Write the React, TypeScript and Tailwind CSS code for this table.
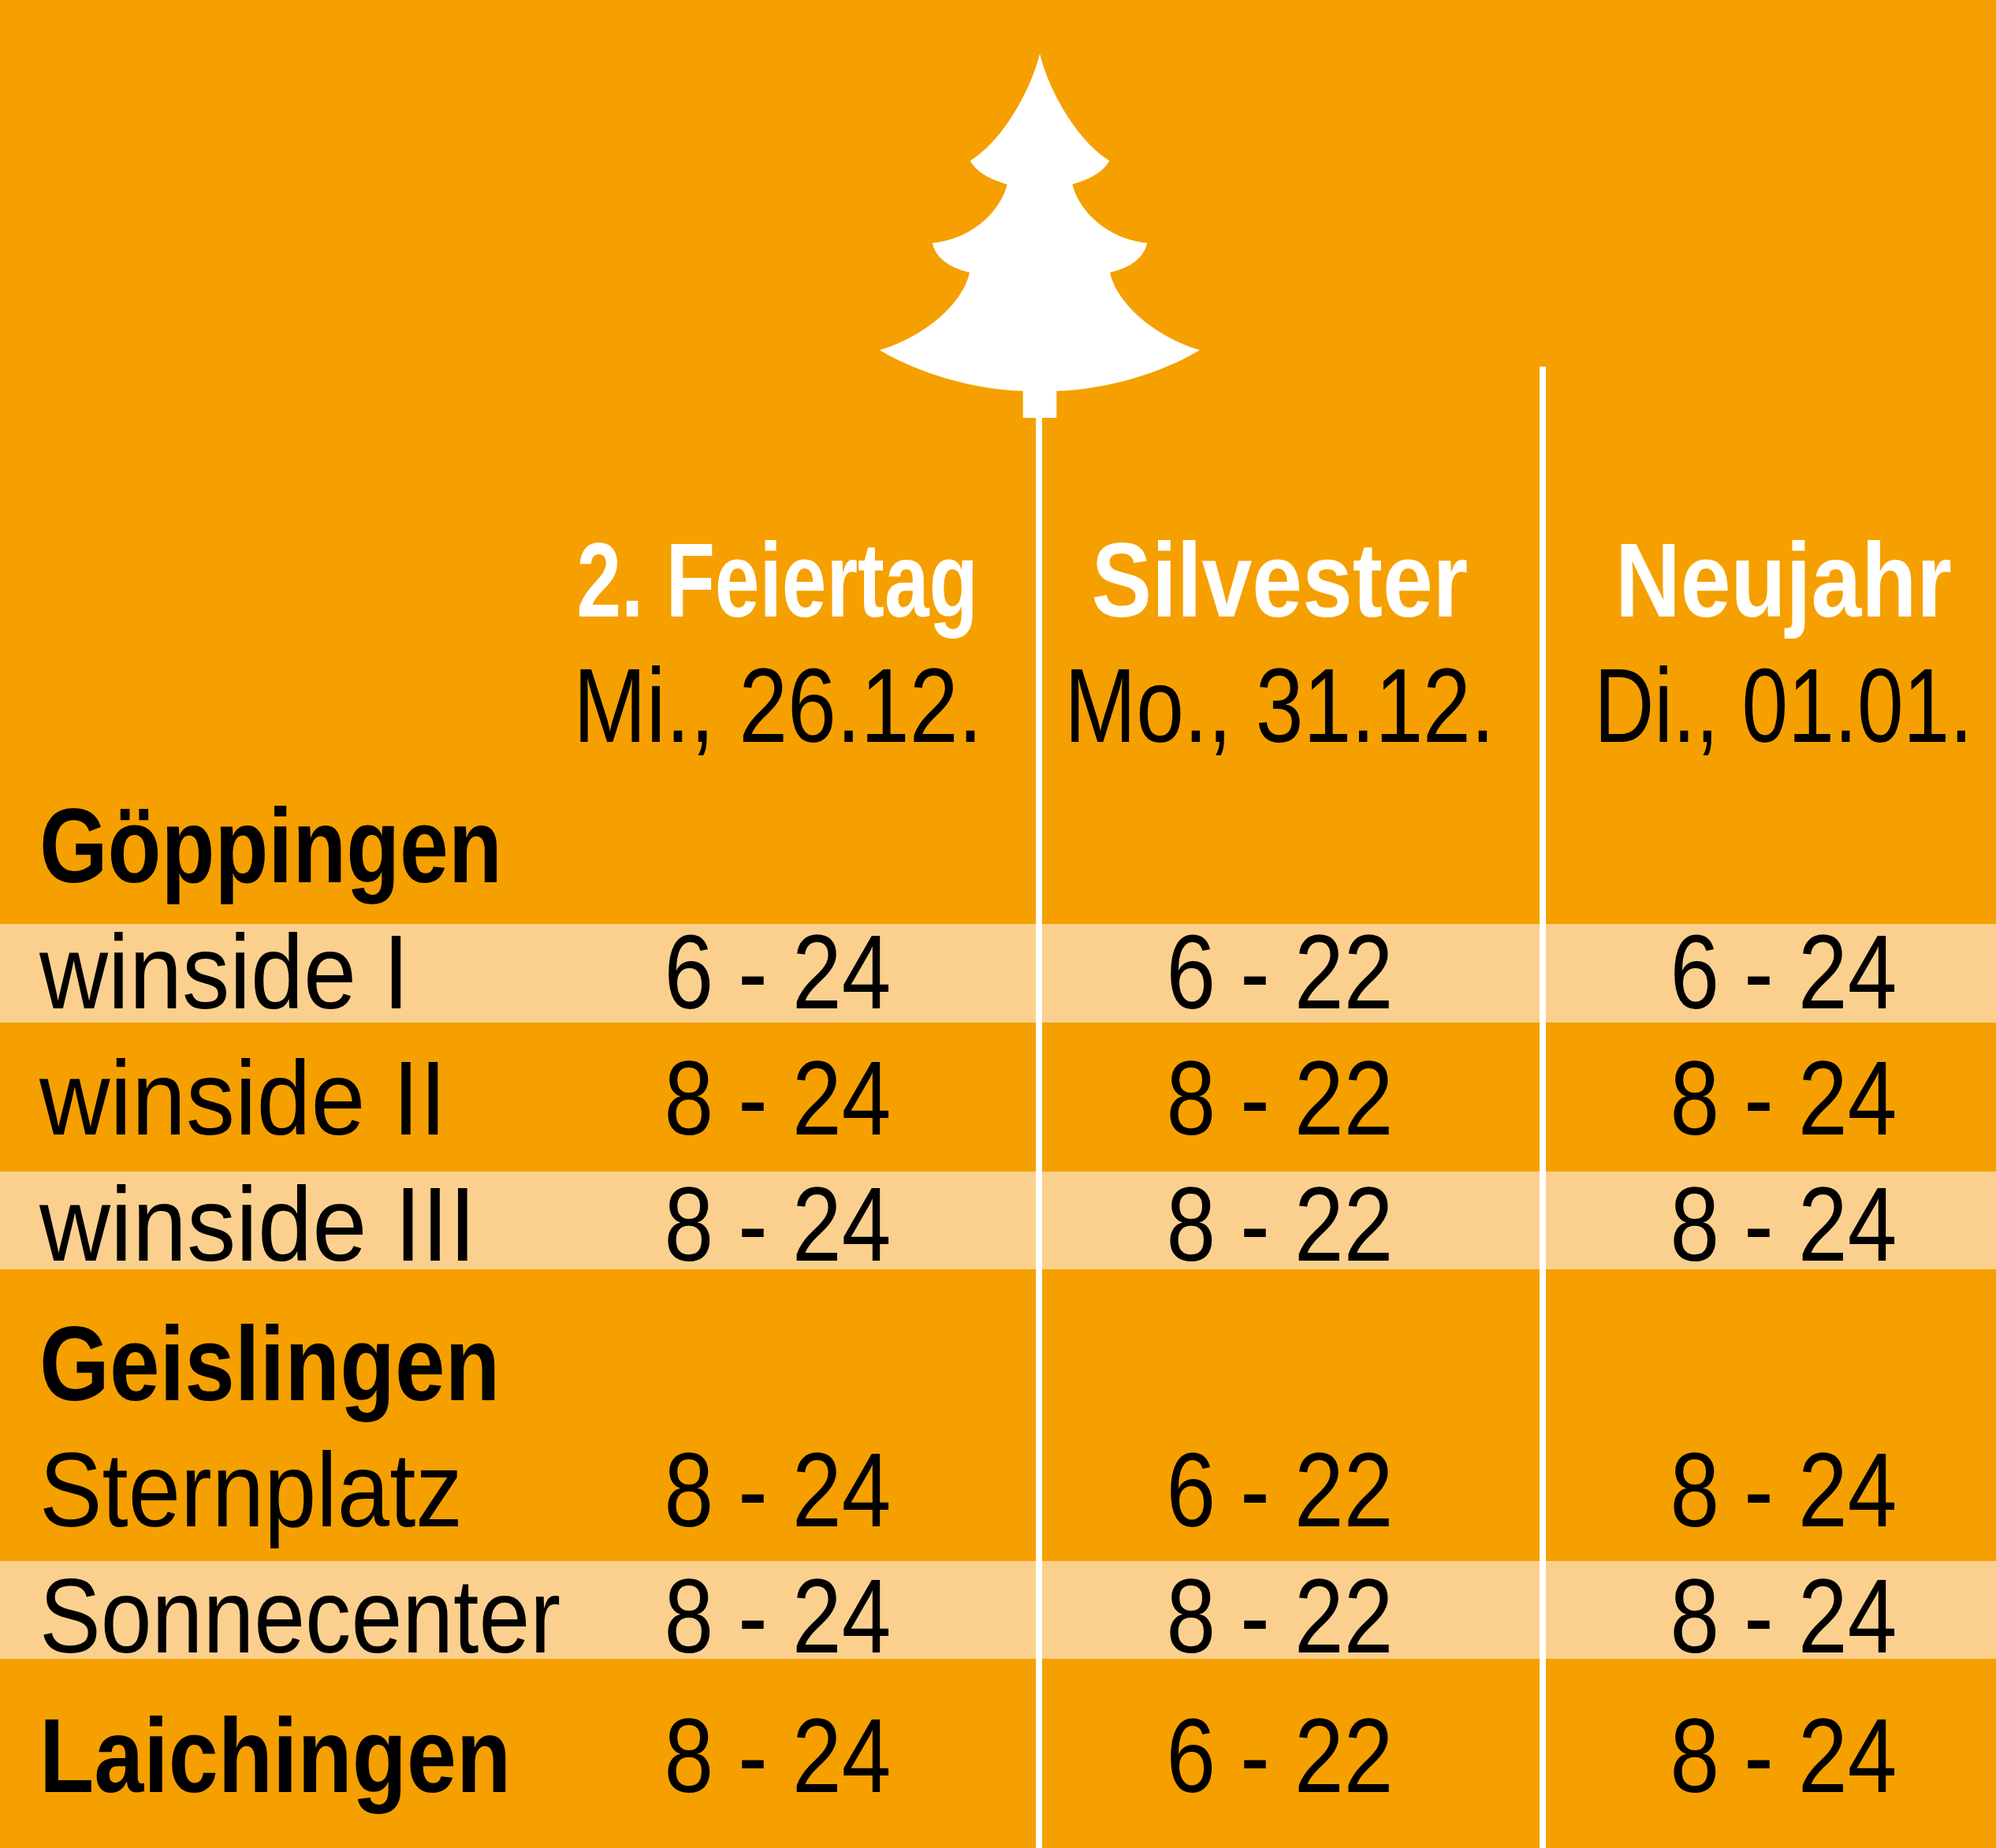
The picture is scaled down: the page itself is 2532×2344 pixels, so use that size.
type Row = {
  label: string
  bold?: boolean
  light?: boolean
  values?: [string, string, string]
  size: string
  squeeze: string
}

const rows: Row[] = [
  { label: 'Göppingen', bold: true, size: 'h-[166px] leading-[134px]', squeeze: 'scale-x-[0.83]' },
  { label: 'winside I', light: true, values: ['6 - 24', '6 - 22', '6 - 24'], size: 'h-[125px] leading-[121px]', squeeze: 'scale-x-[0.9]' },
  { label: 'winside II', values: ['8 - 24', '8 - 22', '8 - 24'], size: 'h-[189px] leading-[191px]', squeeze: 'scale-x-[0.925]' },
  { label: 'winside III', light: true, values: ['8 - 24', '8 - 22', '8 - 24'], size: 'h-[124px] leading-[133px]', squeeze: 'scale-x-[0.93]' },
  { label: 'Geislingen', bold: true, size: 'h-[186px] leading-[239px]', squeeze: 'scale-x-[0.853]' },
  { label: 'Sternplatz', values: ['8 - 24', '6 - 22', '8 - 24'], size: 'h-[184px] leading-[187px]', squeeze: 'scale-x-[0.89]' },
  { label: 'Sonnecenter', light: true, values: ['8 - 24', '8 - 22', '8 - 24'], size: 'h-[124px] leading-[139px]', squeeze: 'scale-x-[0.87]' },
  { label: 'Laichingen', bold: true, values: ['8 - 24', '6 - 22', '8 - 24'], size: 'h-[240px] leading-[245px]', squeeze: 'scale-x-[0.846]' },
]

const cols = [
  { title: '2. Feiertag', date: 'Mi., 26.12.', titleSqueeze: 'scale-x-[0.76]', dateSqueeze: 'scale-x-[0.83]' },
  { title: 'Silvester', date: 'Mo., 31.12.', titleSqueeze: 'scale-x-[0.855]', dateSqueeze: 'scale-x-[0.814]' },
  { title: 'Neujahr', date: 'Di., 01.01.', titleSqueeze: 'scale-x-[0.856]', dateSqueeze: 'scale-x-[0.786]' },
]

// Tannenbaum oben, Stamm läuft in die erste Trennlinie über
function Tree() {
  return (
    <svg width="410" height="462" viewBox="0 0 410 462" className="block">
      <path
        fill="#fff"
        d="M205 0 C197 35 165 105 116.7 136 Q128 156 163.7 165.7 C155 200 120 235 68.7 240.3 Q75 268 116 277.7 C108 315 62 358 2 376 C50 405 120 426 183.7 428 L183.7 462 L226.3 462 L226.3 428 C290 426 360 405 408 376 C348 358 302 315 294 277.7 Q335 268 341.3 240.3 C290 235 255 200 246.3 165.7 Q282 156 293.3 136 C245 105 213 35 205 0 Z"
      />
    </svg>
  )
}

export default function App() {
  return (
    <div className="relative w-[2532px] h-[2344px] overflow-hidden bg-[#f5a000] text-black font-['Liberation_Sans',Arial,sans-serif] text-[134px]">
      {/* Baum */}
      <div className="h-[669px] pt-[68px] pl-[1114px]">
        <Tree />
      </div>

      {/* Kopfzeile: Feiertage */}
      <div className="grid grid-cols-[668px_637px_637px_590px] h-[159px] leading-[134px] font-bold text-white">
        <div />
        {cols.map((c, i) => (
          <div key={c.title} className={i === 2 ? 'flex justify-center pl-[50px] whitespace-nowrap' : 'flex justify-center whitespace-nowrap'}>
            <span className={`inline-block shrink-0 origin-center ${c.titleSqueeze}`}>{c.title}</span>
          </div>
        ))}
      </div>

      {/* Kopfzeile: Datum */}
      <div className="grid grid-cols-[668px_637px_637px_590px] h-[178px] leading-[134px]">
        <div />
        {cols.map((c, i) => (
          <div key={c.date} className={i === 2 ? 'flex justify-center pl-[50px] whitespace-nowrap' : 'flex justify-center whitespace-nowrap'}>
            <span className={`inline-block shrink-0 origin-center ${c.dateSqueeze}`}>{c.date}</span>
          </div>
        ))}
      </div>

      {rows.map((r) => (
        <div
          key={r.label}
          className={`grid grid-cols-[668px_637px_637px_590px] items-start ${r.size} ${r.light ? 'bg-[#fbd08f]' : ''}`}
        >
          <div className={r.bold ? 'pl-[50px] font-bold whitespace-nowrap' : 'pl-[50px] whitespace-nowrap'}>
            <span className={`inline-block origin-left ${r.squeeze}`}>{r.label}</span>
          </div>
          {r.values?.map((v, i) => (
            <div key={i} className={i === 2 ? 'flex justify-center pl-[50px] whitespace-nowrap' : 'flex justify-center whitespace-nowrap'}>
              <span className="inline-block shrink-0 origin-center scale-x-[0.84]">{v}</span>
            </div>
          ))}
        </div>
      ))}

      {/* Trennlinien */}
      <div className="absolute left-[1314px] top-[530px] bottom-0 w-[8px] bg-white" />
      <div className="absolute left-[1953px] top-[465px] bottom-0 w-[8px] bg-white" />
    </div>
  )
}
